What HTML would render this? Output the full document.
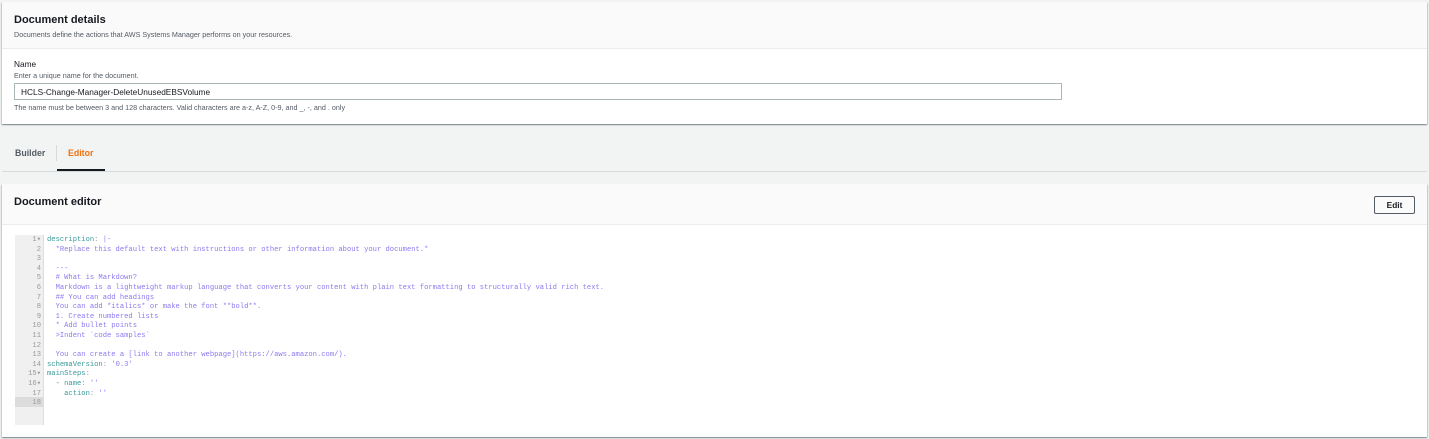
<!DOCTYPE html>
<html><head><style>
*{margin:0;padding:0;box-sizing:border-box}
body{width:1429px;height:439px;background:#f2f3f3;font-family:"Liberation Sans",sans-serif;color:#16191f;position:relative;overflow:hidden}
.card{position:absolute;left:2px;width:1425px;background:#fff;box-shadow:0 1px 1px rgba(0,28,36,.3),1px 1px 1px rgba(0,28,36,.15),-1px 1px 1px rgba(0,28,36,.15)}
.hd{background:#fafafa;border-bottom:1px solid #eaeded}
h2{font-size:11px;font-weight:bold}
.code{position:absolute;font-family:"Liberation Mono",monospace;font-size:7.15px;line-height:9.6px;white-space:pre}
.k{color:#3a9a9a}.s{color:#8c7af0}.p{color:#999}
</style></head><body>
<div class="card" style="top:2px;height:122px">
 <div class="hd" style="height:47px;padding:12px 12px">
  <h2>Document details</h2>
  <div style="font-size:7.2px;color:#545b64;margin-top:4px">Documents define the actions that AWS Systems Manager performs on your resources.</div>
 </div>
 <div style="padding:10px 12px">
  <div style="font-size:8.3px">Name</div>
  <div style="font-size:7.2px;color:#545b64;margin-top:2px">Enter a unique name for the document.</div>
  <div style="margin-top:3px;width:1048px;height:17px;border:1px solid #aab7b8;font-size:8.3px;padding:3px 6px">HCLS-Change-Manager-DeleteUnusedEBSVolume</div>
  <div style="font-size:7.2px;color:#545b64;margin-top:3px">The name must be between 3 and 128 characters. Valid characters are a-z, A-Z, 0-9, and _, -, and . only</div>
 </div>
</div>
<div style="position:absolute;top:171px;left:2px;width:1425px;height:1px;background:#d5dbdb"></div>
<div style="position:absolute;top:148px;left:15px;font-size:8.8px;font-weight:bold;color:#545b64">Builder</div>
<div style="position:absolute;top:145px;left:56px;width:1px;height:16px;background:#d5dbdb"></div>
<div style="position:absolute;top:148px;left:68px;font-size:8.8px;font-weight:bold;color:#ec7211">Editor</div>
<div style="position:absolute;top:169px;left:57px;width:48px;height:2px;background:#16191f"></div>
<div class="card" style="top:184px;height:253px">
 <div class="hd" style="height:41px;padding:12px 12px;position:relative">
  <h2>Document editor</h2>
  <div style="position:absolute;right:12px;top:12px;width:41px;height:18px;border:1px solid #545b64;border-radius:2px;font-size:8.3px;font-weight:bold;text-align:center;line-height:16px">Edit</div>
 </div>
 <div style="position:absolute;left:13px;top:51px;width:29px;height:190px;background:#f0f0f0;border-right:1px solid #ddd"></div>
 <div style="position:absolute;left:13px;top:213px;width:29px;height:10px;background:#dcdcdc"></div>
 <div class="code p" style="left:13px;top:52px;width:26px;text-align:right">1▾
2
3
4
5
6
7
8
9
10
11
12
13
14
15▾
16▾
17
18</div>
 <div class="code" style="left:45px;top:52px"><span class="k">description</span><span class="p">:</span> <span class="s">|-</span>
<span class="s">  *Replace this default text with instructions or other information about your document.*</span>

<span class="s">  ---</span>
<span class="s">  # What is Markdown?</span>
<span class="s">  Markdown is a lightweight markup language that converts your content with plain text formatting to structurally valid rich text.</span>
<span class="s">  ## You can add headings</span>
<span class="s">  You can add *italics* or make the font **bold**.</span>
<span class="s">  1. Create numbered lists</span>
<span class="s">  * Add bullet points</span>
<span class="s">  &gt;Indent `code samples`</span>

<span class="s">  You can create a [link to another webpage](https://aws.amazon.com/).</span>
<span class="k">schemaVersion</span><span class="p">:</span> <span class="s">'0.3'</span>
<span class="k">mainSteps</span><span class="p">:</span>
  <span class="k">- name</span><span class="p">:</span> <span class="s">''</span>
    <span class="k">action</span><span class="p">:</span> <span class="s">''</span>
</div>
</div>
</body></html>
